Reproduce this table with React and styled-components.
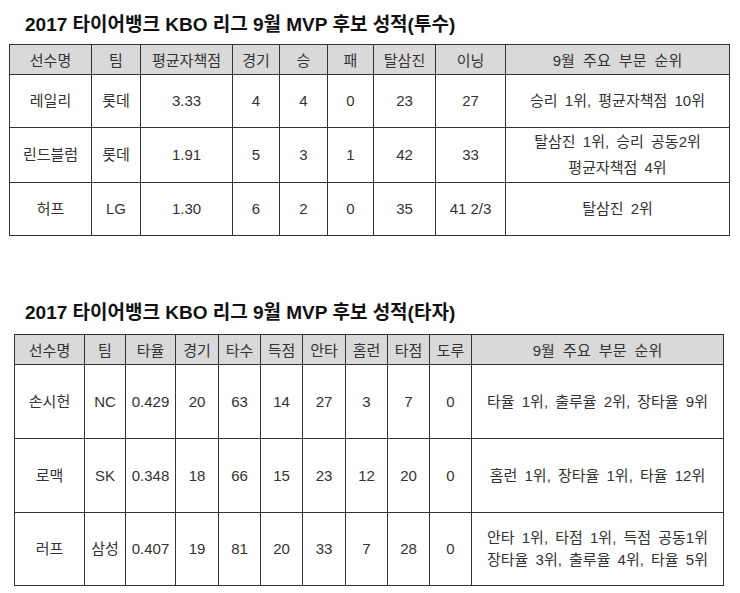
import React from 'react';
import styled, { createGlobalStyle } from 'styled-components';

const GlobalStyle = createGlobalStyle`
    body {
        margin: 0;
        background: #fff;
        font-family: "Liberation Sans", "Noto Sans CJK KR", sans-serif;
    }
`;

const Page = styled.div`
    width: 740px;
    height: 593px;
    padding-top: 15px;
    box-sizing: border-box;
    display: flex;
    flex-direction: column;
`;

const Section = styled.section`
    margin-left: ${p => p.$left}px;
    margin-top: ${p => p.$top || 0}px;
`;

const Title = styled.h2`
    margin: 0 0 ${p => p.$gap}px ${p => p.$indent}px;
    font-size: 19px;
    line-height: 20px;
    font-weight: bold;
    color: #111;
    white-space: nowrap;
`;

const Table = styled.table`
    border-collapse: collapse;
    table-layout: fixed;
    width: ${p => p.$width}px;
    color: #333;
    font-size: 15px;
`;

const Th = styled.th`
    background: #d9d9d9;
    border: 1px solid #333;
    font-weight: normal;
    height: ${p => p.$h}px;
    padding: 0;
    text-align: center;
    box-sizing: border-box;
    word-spacing: ${p => (p.$wide ? 4 : 0)}px;
`;

const Td = styled.td`
    border: 1px solid #333;
    height: ${p => p.$h}px;
    padding: 0;
    text-align: center;
    vertical-align: middle;
    line-height: ${p => p.$lh}px;
    box-sizing: border-box;
    word-spacing: ${p => (p.$wide ? 3 : 0)}px;
    white-space: nowrap;
`;

const pitchCols = [82, 49, 92, 47, 48, 46, 62, 70, 224];
const pitchHead = ['선수명', '팀', '평균자책점', '경기', '승', '패', '탈삼진', '이닝', '9월 주요 부문 순위'];
const pitchRows = [
    { h: 53, cells: ['레일리', '롯데', '3.33', '4', '4', '0', '23', '27', ['승리 1위, 평균자책점 10위']] },
    { h: 55, cells: ['린드블럼', '롯데', '1.91', '5', '3', '1', '42', '33', ['탈삼진 1위, 승리 공동2위', '평균자책점 4위']] },
    { h: 53, cells: ['허프', 'LG', '1.30', '6', '2', '0', '35', '41 2/3', ['탈삼진 2위']] },
];

const batCols = [70, 41, 50, 43, 42, 42, 43, 42, 42, 42, 252];
const batHead = ['선수명', '팀', '타율', '경기', '타수', '득점', '안타', '홈런', '타점', '도루', '9월 주요 부문 순위'];
const batRows = [
    { h: 74, cells: ['손시헌', 'NC', '0.429', '20', '63', '14', '27', '3', '7', '0', ['타율 1위, 출루율 2위, 장타율 9위']] },
    { h: 74, cells: ['로맥', 'SK', '0.348', '18', '66', '15', '23', '12', '20', '0', ['홈런 1위, 장타율 1위, 타율 12위']] },
    { h: 73, cells: ['러프', '삼성', '0.407', '19', '81', '20', '33', '7', '28', '0', ['안타 1위, 타점 1위, 득점 공동1위', '장타율 3위, 출루율 4위, 타율 5위']] },
];

const StatTable = ({ cols, head, rows, lh }) => (
    <Table $width={cols.reduce((a, b) => a + b, 0)}>
        <colgroup>
            {cols.map((w, i) => <col key={i} style={{ width: w }} />)}
        </colgroup>
        <thead>
            <tr>
                {head.map((h, i) => <Th key={i} $h={30} $wide={i === head.length - 1}>{h}</Th>)}
            </tr>
        </thead>
        <tbody>
            {rows.map((row, r) => (
                <tr key={r}>
                    {row.cells.map((c, i) => (
                        <Td key={i} $h={row.h} $lh={lh} $wide={Array.isArray(c)}>
                            {Array.isArray(c) ? c.map((line, j) => <div key={j}>{line}</div>) : c}
                        </Td>
                    ))}
                </tr>
            ))}
        </tbody>
    </Table>
);

const App = () => (
    <>
        <GlobalStyle />
        <Page>
            <Section $left={9}>
                <Title $indent={16} $gap={9}>2017 타이어뱅크 KBO 리그 9월 MVP 후보 성적(투수)</Title>
                <StatTable cols={pitchCols} head={pitchHead} rows={pitchRows} lh={26} />
            </Section>
            <Section $left={14} $top={67}>
                <Title $indent={11} $gap={11}>2017 타이어뱅크 KBO 리그 9월 MVP 후보 성적(타자)</Title>
                <StatTable cols={batCols} head={batHead} rows={batRows} lh={22} />
            </Section>
        </Page>
    </>
);

export default App;
